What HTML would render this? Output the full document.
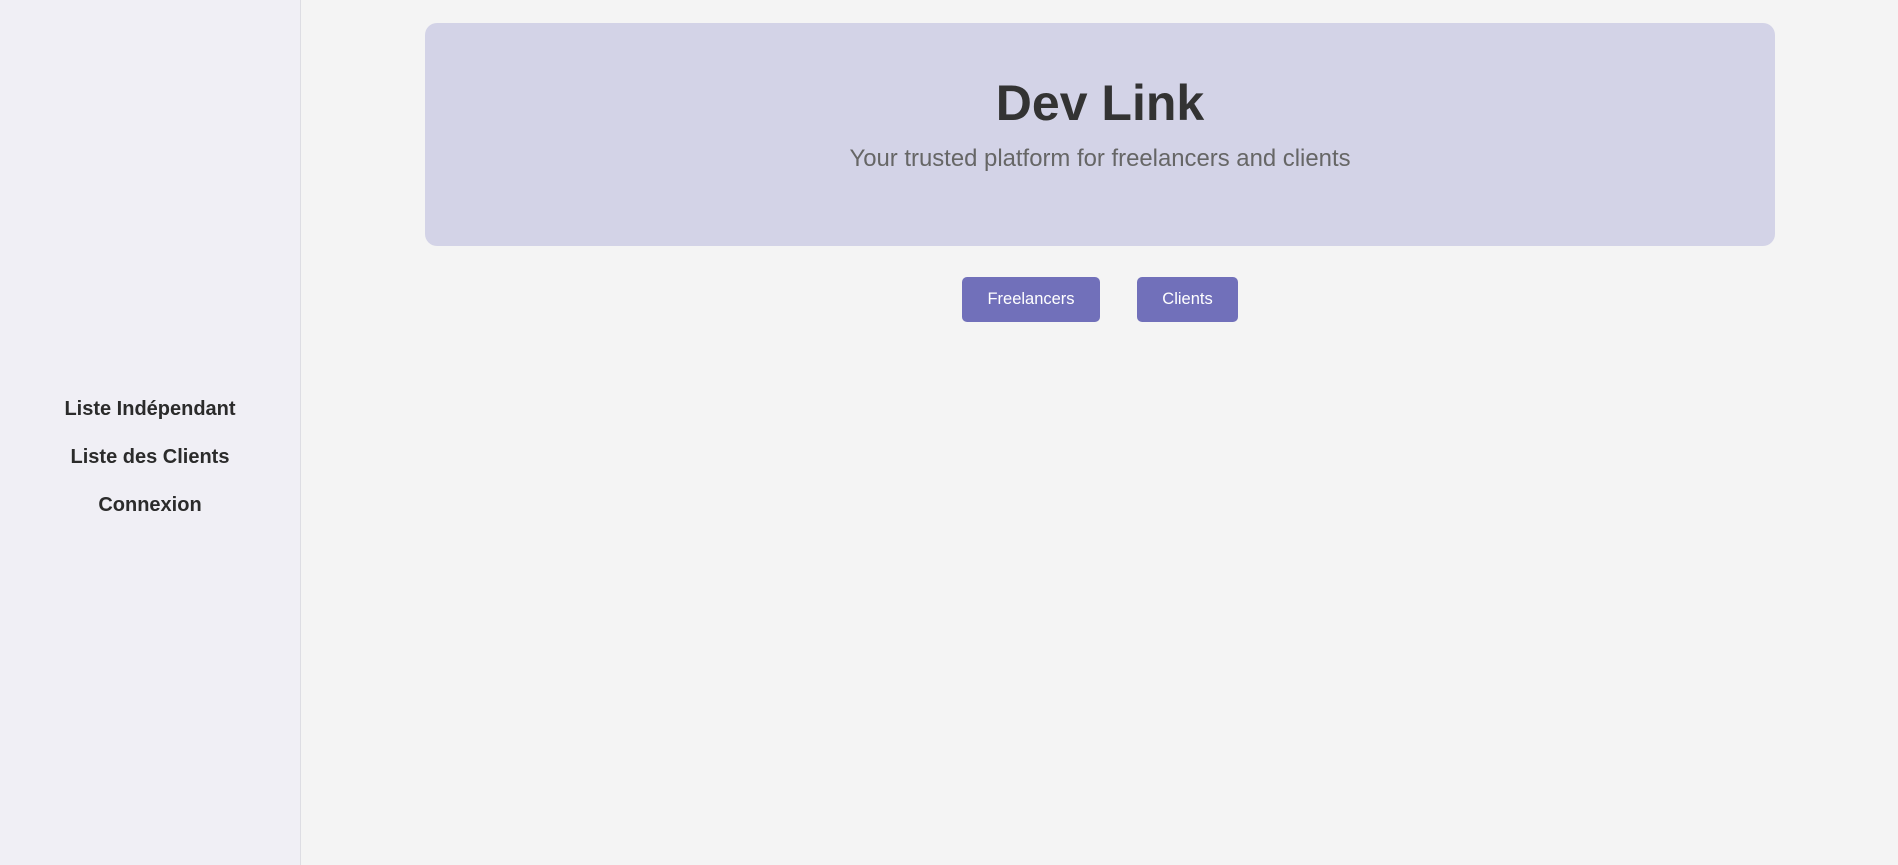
<!DOCTYPE html>
<html><head><meta charset="utf-8"><style>
html,body{margin:0;padding:0;width:1898px;height:865px;background:#f4f4f4;font-family:"Liberation Sans",Arial,sans-serif;overflow:hidden}
.side{position:absolute;left:0;top:0;width:300px;height:865px;background:#f0eff5;border-right:1px solid #dddde3}
.side a{position:absolute;left:0;width:300px;text-align:center;font-weight:bold;font-size:20px;color:#2b2b2b;text-decoration:none;line-height:24px}
.hero{position:absolute;left:425px;top:23px;width:1350px;height:223px;background:#d3d3e7;border-radius:12px;text-align:center}
.hero h1{margin:0;position:absolute;top:52px;width:100%;font-size:50px;line-height:56px;color:#333;font-weight:bold}
.hero p{margin:0;position:absolute;top:122px;width:100%;font-size:23.9px;line-height:28px;color:#666}
.btn{position:absolute;top:277px;height:45px;background:#7170ba;border-radius:5px;color:#fff;font-size:16.5px;line-height:45px;text-align:center}
</style></head><body>
<div class="side">
<a style="top:397px">Liste Indépendant</a>
<a style="top:445px">Liste des Clients</a>
<a style="top:493px">Connexion</a>
</div>
<div class="hero"><h1>Dev Link</h1><p>Your trusted platform for freelancers and clients</p></div>
<div class="btn" style="left:962px;width:138px">Freelancers</div>
<div class="btn" style="left:1137px;width:101px">Clients</div>
</body></html>
